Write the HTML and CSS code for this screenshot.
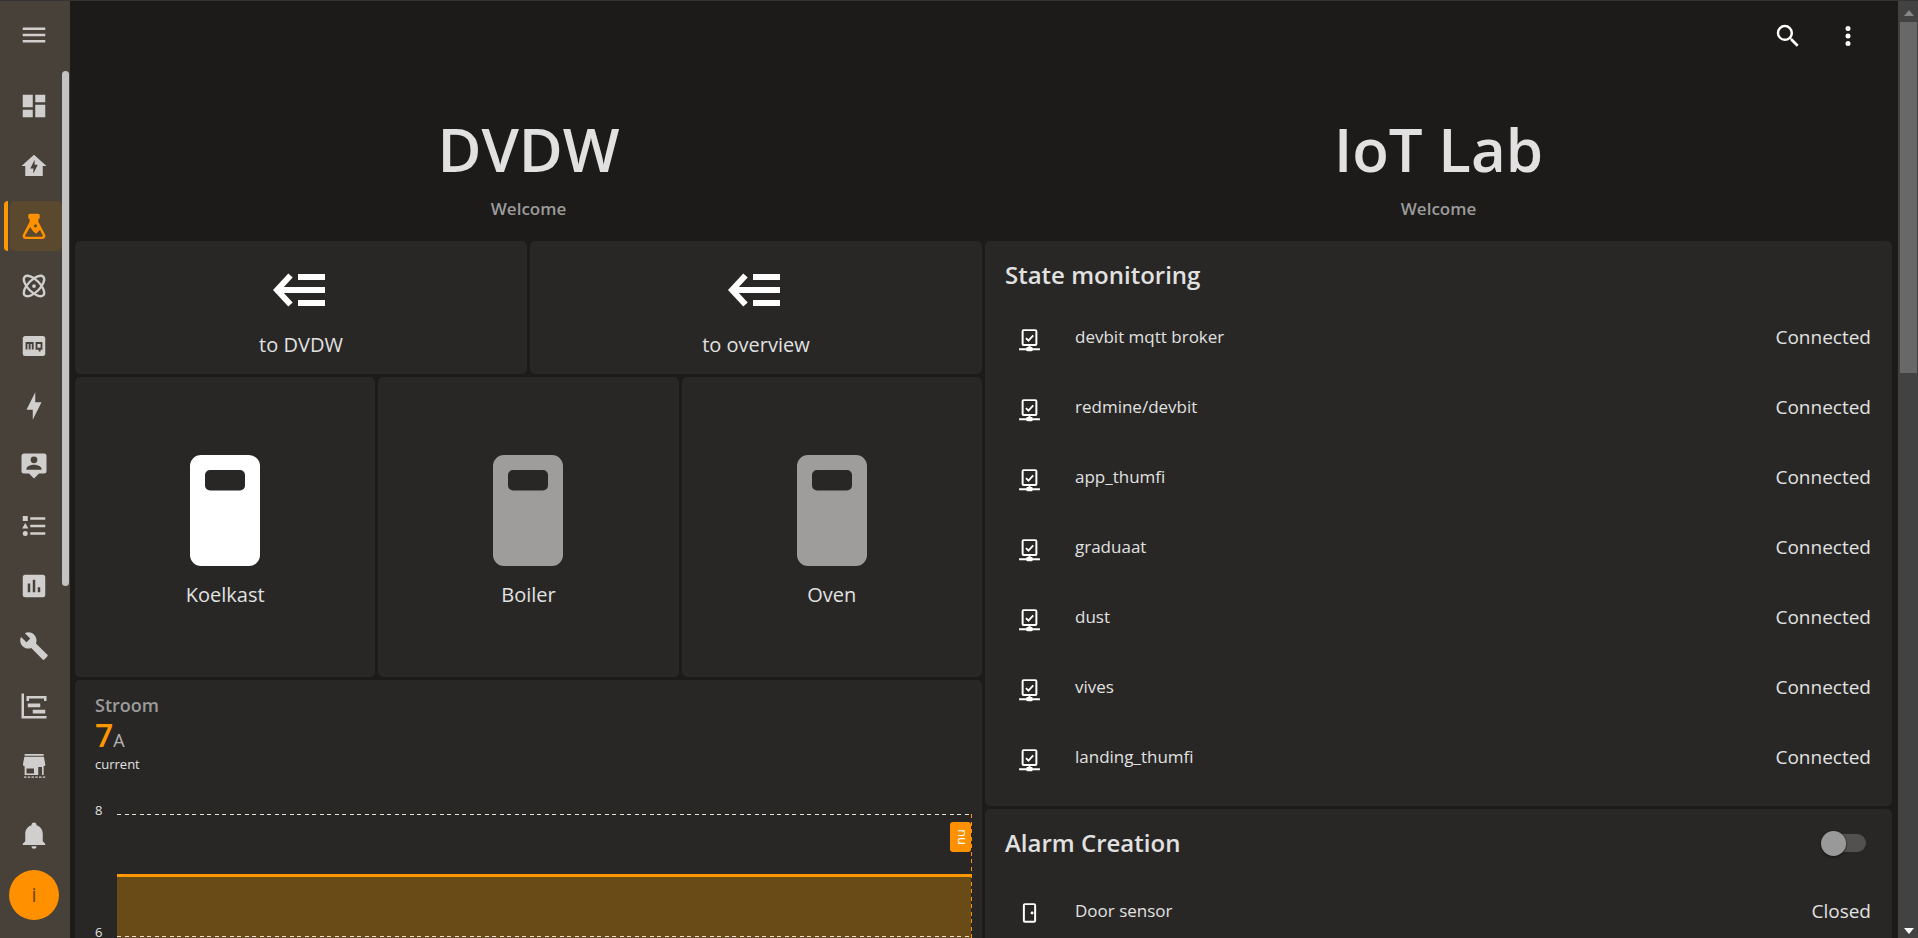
FILE: index.html
```html
<!DOCTYPE html>
<html lang="en">
<head>
<meta charset="utf-8">
<title>IoT Lab</title>
<link rel="stylesheet" href="styles.css">
</head>
<body>
<svg class="sprite" aria-hidden="true">
  <symbol id="net" viewBox="0 0 24 24"><path fill="none" stroke="currentColor" stroke-width="1.9" d="M6.4 3h11.2a1 1 0 0 1 1 1v12.2a1 1 0 0 1-1 1H6.4a1 1 0 0 1-1-1V4a1 1 0 0 1 1-1ZM12 17v3M2 21.3h20"/><path fill="none" stroke="currentColor" stroke-width="1.8" d="m8.6 10.6 2.4 2.4 4.6-5"/><rect x="9" y="19.2" width="6" height="4" rx="1" fill="currentColor"/></symbol>
  <symbol id="back" viewBox="0 0 56 34"><path fill="none" stroke="currentColor" stroke-width="6" d="M17.500 2.500 4 17l13.500 14.500M5 17h47M25 4h27M25 30h27"/></symbol>
  <symbol id="appliance" viewBox="0 0 70 111"><path fill="currentColor" fill-rule="evenodd" d="M11 0h48a11 11 0 0 1 11 11v89a11 11 0 0 1-11 11H11a11 11 0 0 1-11-11V11A11 11 0 0 1 11 0Zm9 15a5 5 0 0 0-5 5v10.500a5 5 0 0 0 5 5h30a5 5 0 0 0 5-5V20a5 5 0 0 0-5-5Z"/></symbol>
</svg>
<div class="app">
  <nav class="sidebar" aria-label="Main">
    <button class="side-btn menu" aria-label="Menu"><svg class="icon" viewBox="0 0 24 24"><path d="M3,6H21V8H3V6M3,11H21V13H3V11M3,16H21V18H3V16Z"/></svg></button>
    <div class="side-list">
      <a class="side-btn" href="#" aria-label="Overview"><svg class="icon" viewBox="0 0 24 24"><path d="M13,3V9H21V3M13,21H21V11H13M3,21H11V15H3M3,13H11V3H3V13Z"/></svg></a>
      <a class="side-btn" href="#" aria-label="Energy home"><svg class="icon" viewBox="0 0 24 24"><path d="M12 3L2 12H5V20H19V12H22L12 3M11.500 18V14H9L12.500 7V11H15L11.500 18Z"/></svg></a>
      <a class="side-btn active" href="#" aria-label="IoT Lab"><svg class="icon" viewBox="0 0 24 24"><path fill-rule="evenodd" d="M8.800 2.200h6.400c1 0 1.400.6 1.400 1.400v1.600c0 .7-.4 1.100-1.100 1.200v2.200l5.300 10.200c.9 1.800-.3 3.500-2 3.500H5.200c-1.700 0-2.900-1.700-2-3.500L8.500 8.600V6.400c-.7-.1-1.100-.5-1.100-1.200V3.600c0-.8.400-1.400 1.400-1.400ZM8.900 12.800 5.100 19.300c-.4.700 0 1.200.6 1.200h12.600c.6 0 1-.5.600-1.200L16.800 15.200l-3.200 3Q11 16.500 8.900 12.800ZM13.100 10.700a1.200 1.200 0 1 0 .01 2.400 1.200 1.200 0 0 0-.01-2.400Z"/></svg></a>
      <a class="side-btn" href="#" aria-label="Physics"><svg class="icon" viewBox="0 0 24 24"><g fill="none" stroke="currentColor" stroke-width="1.9"><ellipse cx="12" cy="12" rx="10.500" ry="4.800" transform="rotate(45 12 12)"/><ellipse cx="12" cy="12" rx="10.500" ry="4.800" transform="rotate(-45 12 12)"/></g><circle cx="12" cy="12" r="1.500"/></svg></a>
      <a class="side-btn" href="#" aria-label="MQTT"><svg class="icon" viewBox="0 0 24 24"><rect x="3" y="4" width="18" height="16" rx="2"/><path class="cut" d="M6 14.800V9.600h5v5.200M8.500 9.600v5.200M14 9.600h4v4.600h-4ZM16.500 14v2.400"/></svg></a>
      <a class="side-btn" href="#" aria-label="Energy"><svg class="icon" viewBox="0 0 24 24"><path d="M11 15H6L13 1V9H18L11 23V15Z"/></svg></a>
      <a class="side-btn" href="#" aria-label="Map"><svg class="icon" viewBox="0 0 24 24"><path fill-rule="evenodd" d="M20,2H4A2,2 0 0,0 2,4V16A2,2 0 0,0 4,18H8L12,22L16,18H20A2,2 0 0,0 22,16V4A2,2 0 0,0 20,2M12,4.300A2.700 2.700 0 0 1 12 9.700A2.700 2.700 0 0 1 12 4.300M18,15H6V14.100C6,12.100 10,11 12,11C14,11 18,12.100 18,14.100V15Z"/></svg></a>
      <a class="side-btn" href="#" aria-label="Logbook"><svg class="icon" viewBox="0 0 24 24"><path d="M5,9.500L7.500,14H2.500L5,9.500M3,4H7V8H3V4M5,20A2,2 0 0,0 7,18A2,2 0 0,0 5,16A2,2 0 0,0 3,18A2,2 0 0,0 5,20M9,5V7H21V5H9M9,19H21V17H9V19M9,13H21V11H9V13Z"/></svg></a>
      <a class="side-btn" href="#" aria-label="History"><svg class="icon" viewBox="0 0 24 24"><path fill-rule="evenodd" d="M9 17H7V10H9V17M13 17H11V7H13V17M17 17H15V13H17V17M19 3H5A2 2 0 0 0 3 5V19A2 2 0 0 0 5 21H19A2 2 0 0 0 21 19V5A2 2 0 0 0 19 3Z"/></svg></a>
      <a class="side-btn" href="#" aria-label="Tools"><svg class="icon" viewBox="0 0 24 24"><path d="M22.700,19L13.600,9.900C14.500,7.600 14,4.900 12.100,3C10.100,1 7.100,0.600 4.700,1.700L9,6L6,9L1.600,4.700C0.400,7.100 0.900,10.100 2.900,12.100C4.800,14 7.500,14.500 9.800,13.600L18.900,22.700C19.300,23.100 19.900,23.100 20.300,22.700L22.600,20.400C23.100,20 23.100,19.300 22.700,19Z"/></svg></a>
      <a class="side-btn" href="#" aria-label="Planning"><svg class="icon" viewBox="0 0 24 24"><path d="M2,2H4V20H22V22H2V2M7,10H17V13H7V10M11,15H21V18H11V15M6,4H22V8H20V6H8V8H6V4Z"/></svg></a>
      <a class="side-btn" href="#" aria-label="Store"><svg class="icon" viewBox="0 0 24 24"><path fill-rule="evenodd" d="M4.500 2.300h15.200v1.400H4.500ZM4.300 4.600h15.600L21 10.500c.2 1-.4 1.700-1.300 1.700v7h-1.300v-6.500h-3V19.200H4.500v-7c-.9 0-1.500-.7-1.300-1.700ZM6 14v4h6v-4Z"/><path fill="none" stroke="currentColor" stroke-dasharray="2 1" d="M4 20.800h17"/></svg></a>
    </div>
    <button class="side-btn bell" aria-label="Notifications"><svg class="icon" viewBox="0 0 24 24"><path d="M21,19V20H3V19L5,17V11C5,7.900 7.030,5.170 10,4.290C10,4.190 10,4.100 10,4A2,2 0 0,1 12,2A2,2 0 0,1 14,4C14,4.100 14,4.190 14,4.290C16.970,5.170 19,7.900 19,11V17L21,19M14,21A2,2 0 0,1 12,23A2,2 0 0,1 10,21"/></svg></button>
    <button class="avatar" aria-label="Profile">i</button>
    <span class="side-scroll"></span>
  </nav>

  <main class="main">
    <header class="toolbar">
      <button class="tool" aria-label="Search"><svg class="icon" viewBox="0 0 24 24"><path d="M9.500,3A6.500,6.500 0 0,1 16,9.500C16,11.110 15.410,12.590 14.440,13.730L14.710,14H15.500L20.500,19L19,20.500L14,15.500V14.710L13.730,14.440C12.590,15.410 11.110,16 9.500,16A6.500,6.500 0 0,1 3,9.500A6.500,6.500 0 0,1 9.500,3M9.500,5C7,5 5,7 5,9.500C5,12 7,14 9.500,14C12,14 14,12 14,9.500C14,7 12,5 9.500,5Z"/></svg></button>
      <button class="tool" aria-label="More"><svg class="icon" viewBox="0 0 24 24"><circle cx="12" cy="6" r="2"/><circle cx="12" cy="12" r="2"/><circle cx="12" cy="18" r="2"/></svg></button>
    </header>

    <div class="columns">
      <section class="column">
        <div class="hero"><h1>DVDW</h1><p>Welcome</p></div>
        <div class="row">
          <button class="card nav-card"><svg class="back"><use href="#back"/></svg>to DVDW</button>
          <button class="card nav-card"><svg class="back"><use href="#back"/></svg>to overview</button>
        </div>
        <div class="row">
          <button class="card device on"><svg class="appliance"><use href="#appliance"/></svg><span>Koelkast</span></button>
          <button class="card device"><svg class="appliance"><use href="#appliance"/></svg><span>Boiler</span></button>
          <button class="card device"><svg class="appliance"><use href="#appliance"/></svg><span>Oven</span></button>
        </div>
        <div class="card chart">
          <h2>Stroom</h2>
          <p class="value"><strong>7</strong>A</p>
          <p class="caption">current</p>
          <div class="graph">
            <div class="axis"><span>8</span><span>6</span></div>
            <div class="plot">
              <div class="area"></div>
              <svg class="grid">
                <g stroke-dasharray="4 3.500">
                  <line x1="0" y1="1" x2="100%" y2="1"/>
                  <line x1="0" y1="123" x2="100%" y2="123"/>
                  <line class="now-line" x1="100%" y1="1" x2="100%" y2="100%"/>
                </g>
              </svg>
              <span class="now">nu</span>
            </div>
          </div>
        </div>
      </section>

      <section class="column">
        <div class="hero"><h1>IoT Lab</h1><p>Welcome</p></div>
        <div class="card list">
          <h2>State monitoring</h2>
          <ul>
            <li><svg class="state"><use href="#net"/></svg><span>devbit mqtt broker</span><b>Connected</b></li>
            <li><svg class="state"><use href="#net"/></svg><span>redmine/devbit</span><b>Connected</b></li>
            <li><svg class="state"><use href="#net"/></svg><span>app_thumfi</span><b>Connected</b></li>
            <li><svg class="state"><use href="#net"/></svg><span>graduaat</span><b>Connected</b></li>
            <li><svg class="state"><use href="#net"/></svg><span>dust</span><b>Connected</b></li>
            <li><svg class="state"><use href="#net"/></svg><span>vives</span><b>Connected</b></li>
            <li><svg class="state"><use href="#net"/></svg><span>landing_thumfi</span><b>Connected</b></li>
          </ul>
        </div>
        <div class="card list alarm">
          <div class="list-head"><h2 id="alarm">Alarm Creation</h2><input class="switch" type="checkbox" role="switch" aria-labelledby="alarm"></div>
          <ul>
            <li><svg class="state" viewBox="0 0 24 24"><rect x="6.600" y="3" width="10.800" height="17" rx="1" fill="none" stroke="currentColor" stroke-width="1.900"/><circle cx="14.500" cy="11.500" r="1.400" fill="currentColor"/></svg><span>Door sensor</span><b>Closed</b></li>
          </ul>
        </div>
      </section>
    </div>
  </main>

  <div class="scrollbar" aria-hidden="true">
    <svg class="arrow up" viewBox="0 0 10 6"><path d="M5 0 10 6H0Z"/></svg>
    <span class="thumb"></span>
    <svg class="arrow down" viewBox="0 0 10 6"><path d="M0 0h10L5 6Z"/></svg>
  </div>
</div>
</body>
</html>
```
FILE: styles.css
```css
* { box-sizing: border-box; }

body {
  margin: 0;
  background: #1c1b19;
  color: #e1e1e1;
  font-family: "Open Sans", "Noto Sans", sans-serif;
  font-size: 17px;
  line-height: 24px;
}

h1, h2, p, ul { margin: 0; padding: 0; }
ul { list-style: none; }
button { border: 0; padding: 0; background: none; color: inherit; font: inherit; cursor: pointer; }
.sprite { display: none; }
.icon { display: block; width: 30px; height: 30px; fill: currentColor; }

.app {
  display: flex;
  height: 100vh;
  overflow: hidden;
  border-top: 1px solid #353535;
}

/* Sidebar */
.sidebar {
  position: relative;
  flex: none;
  width: 70px;
  padding: 9px 8px 18px 10px;
  display: flex;
  flex-direction: column;
  background: #484139;
  color: #d0cfcd;
}
.side-btn {
  position: relative;
  flex: none;
  display: grid;
  place-items: center;
  width: 100%;
  height: 50px;
  padding-right: 4px;
  border-radius: 5px;
  color: inherit;
}
.side-list { margin-top: 21px; flex: 1; display: flex; flex-direction: column; gap: 10px; }
.side-btn.active { background: #5b492f; color: #ff9100; }
.side-btn.active::before {
  content: "";
  position: absolute;
  left: -6px;
  top: 0;
  width: 4px;
  height: 100%;
  background: #ff9800;
  border-radius: 4px 0 0 4px;
}
.cut { fill: none; stroke: #484139; stroke-width: 1.5; }
.bell { margin-bottom: 10px; }
.avatar {
  width: 50px;
  height: 50px;
  margin-left: -1px;
  border-radius: 50%;
  background: #ff9000;
  color: #6b4615;
  font-size: 20px;
}
.side-scroll {
  position: absolute;
  right: 1px;
  top: 70px;
  width: 7px;
  height: 515px;
  border-radius: 4px;
  background: #c3c3c3;
}

/* Page */
.main { flex: 1; min-width: 0; padding: 0 6px 0 5px; }
.toolbar {
  height: 70px;
  padding-right: 14px;
  display: flex;
  justify-content: flex-end;
  align-items: center;
  color: #fff;
}
.tool { width: 60px; height: 60px; display: grid; place-items: center; }
.columns { display: grid; grid-template-columns: 1fr 1fr; gap: 3px; }
.column { display: flex; flex-direction: column; gap: 3px; min-width: 0; }
.hero { height: 167px; padding-top: 38px; text-align: center; }
.hero h1 { font-size: 60px; line-height: 80px; font-weight: 600; }
.hero p { margin-top: 8px; color: #9b9b9b; font-weight: 600; }

.row { display: flex; gap: 3px; }
.card { border-radius: 5px; background: #282725; }
.row .card { flex: 1; }
.nav-card {
  height: 133px;
  padding-top: 32px;
  display: flex;
  flex-direction: column;
  align-items: center;
  gap: 26px;
  font-size: 20px;
}
.back { width: 56px; height: 34px; color: #fff; }
.device {
  aspect-ratio: 1;
  padding-top: 8px;
  display: flex;
  flex-direction: column;
  align-items: center;
  justify-content: center;
  gap: 17px;
  font-size: 20px;
}
.appliance { width: 70px; height: 111px; color: #9e9d9b; }
.on .appliance { color: #fff; }

/* Chart */
.chart { padding: 12px 11px 0 20px; }
.chart h2 { font-size: 18px; line-height: 26px; font-weight: 600; color: #9b9b9b; }
.value { margin-top: 2px; display: flex; align-items: baseline; font-size: 18px; line-height: 30px; color: #b4b4b4; }
.value strong { font-size: 32px; font-weight: 600; color: #ff9800; }
.caption { font-size: 13px; line-height: 18px; }
.graph { display: flex; margin-top: 40px; }
.axis { width: 22px; font-size: 13px; line-height: 18px; margin-top: -12px; display: flex; flex-direction: column; gap: 104px; }
.plot { position: relative; flex: 1; height: 250px; }
.area { position: absolute; inset: 61px 0 0; background: #694b18; border-top: 3px solid #ff9800; }
.grid { position: absolute; inset: 0; width: 100%; height: 100%; overflow: visible; }
.grid line { stroke: #e6e0d6; stroke-width: 1; shape-rendering: crispEdges; }
.grid .now-line { stroke: #ff9000; }
.now {
  position: absolute;
  right: 0;
  top: 9px;
  width: 21px;
  height: 30px;
  border-radius: 3px;
  background: #ff9000;
  color: #fff;
  font-size: 13px;
  line-height: 21px;
  text-align: center;
  writing-mode: sideways-lr;
}

/* Lists */
.list { padding: 18px 21px 24px 20px; }
.list h2 { font-size: 24px; line-height: 32px; font-weight: 600; }
.list ul { margin-top: 21px; display: flex; flex-direction: column; gap: 20px; }
.list li { height: 50px; padding-left: 12px; display: flex; align-items: center; }
.list li span { flex: 1; margin-left: 33px; }
.list li b { font-size: 19px; font-weight: 400; }
.state { width: 25px; height: 25px; color: #fff; margin-top: 4px; }
.list-head { display: flex; justify-content: space-between; align-items: center; padding-right: 5px; }
.alarm ul { margin-top: 27px; }
.switch {
  appearance: none;
  position: relative;
  width: 44px;
  height: 18px;
  margin: 0;
  border-radius: 9px;
  background: #52514f;
}
.switch::before {
  content: "";
  position: absolute;
  left: -1px;
  top: -3px;
  width: 25px;
  height: 25px;
  border-radius: 50%;
  background: #999;
  box-shadow: 0 1px 3px #0008;
}

/* Scrollbar */
.scrollbar {
  flex: none;
  width: 20px;
  padding: 9px 1px 4px 2px;
  display: flex;
  flex-direction: column;
  align-items: center;
  background: #424242;
}
.arrow { width: 10px; height: 6px; flex: none; }
.up { fill: #868686; }
.down { fill: #fff; margin-top: auto; }
.thumb { width: 100%; height: 38%; margin-top: 6px; background: #686868; }
```
